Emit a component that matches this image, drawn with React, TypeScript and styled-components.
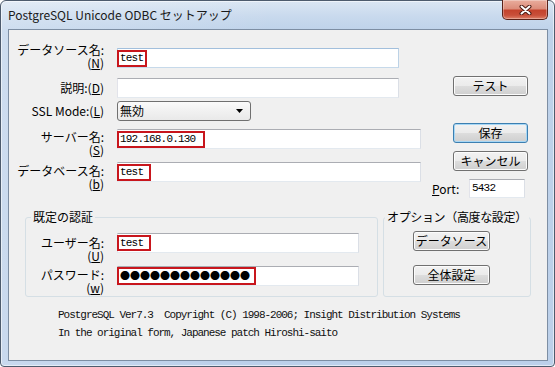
import React from 'react';
import styled, { createGlobalStyle } from 'styled-components';

const GlobalStyle = createGlobalStyle`
	html, body {
		margin: 0;
		padding: 0;
		background: #ffffff;
	}

	body {
		font-family: "Noto Sans CJK JP", "Liberation Sans", sans-serif;
		font-size: 12px;
		color: #000;
	}
`;

const Window = styled.div`
	width: 555px;
	height: 367px;
	box-sizing: border-box;
	display: flex;
	flex-direction: column;
	padding: 0 6px 5px 7px;
	border: 1px solid #4d5b6d;
	border-radius: 6px 6px 4px 4px;
	background:
		linear-gradient(100deg, rgba(255, 255, 255, 0.25) 0%, rgba(255, 255, 255, 0) 45%),
		linear-gradient(180deg, #dae6f3 0px, #c8d9ed 16px, #bed2ea 30px, #bcd0ea 100%);
	box-shadow: inset 0 0 0 1px rgba(255, 255, 255, 0.55);
`;

const TitleBar = styled.div`
	height: 28px;
	flex: none;
	display: flex;
	align-items: flex-start;
	justify-content: space-between;
`;

const Title = styled.div`
	line-height: 28px;
	font-size: 12px;
	color: #1a1a1a;
	white-space: nowrap;
`;

const CloseButton = styled.div`
	width: 46px;
	height: 20px;
	margin-top: -1px;
	box-sizing: border-box;
	display: flex;
	align-items: center;
	justify-content: center;
	border: 1px solid #5a2219;
	border-top: none;
	border-radius: 0 0 5px 5px;
	background: linear-gradient(180deg, #e9ad9d 0%, #dc8d7b 45%, #c4432d 55%, #c84f3a 80%, #de8068 100%);
	box-shadow: inset 0 0 0 1px rgba(255, 255, 255, 0.3);
`;

const Client = styled.div`
	height: 332px;
	box-sizing: border-box;
	display: flex;
	flex-direction: column;
	border: 1px solid #7d8ea3;
	background: #f0f0f0;
`;

const TopSection = styled.div`
	height: 179px;
	flex: none;
	display: flex;
	align-items: flex-start;
	gap: 11px;
`;

const FormColumn = styled.div`
	width: 412px;
	padding-top: 18px;
	display: flex;
	flex-direction: column;
`;

const ButtonColumn = styled.div`
	width: 96px;
	padding-top: 46px;
	display: flex;
	flex-direction: column;
	align-items: flex-end;
`;

const FieldRow = styled.div<{ $mt?: number }>`
	height: 20px;
	margin-top: ${p => p.$mt || 0}px;
	display: flex;
	align-items: flex-start;
`;

const Label = styled.div<{ $w?: number; $offset?: number }>`
	width: ${p => p.$w || 95}px;
	margin-right: 13px;
	margin-top: ${p => p.$offset || 0}px;
	flex: none;
	text-align: right;
	line-height: 12.5px;
	font-size: 12px;
	white-space: nowrap;

	u {
		text-decoration-thickness: 1px;
		text-underline-offset: 1px;
	}
`;

const Field = styled.div<{ $w: number; $h?: number; $focus?: boolean }>`
	width: ${p => p.$w}px;
	height: ${p => p.$h || 20}px;
	box-sizing: border-box;
	display: flex;
	align-items: center;
	background: #fff;
	border: 1px solid;
	border-color: ${p => p.$focus
		? '#a2bfdc #bcd2e6 #c6d9ea #bcd2e6'
		: '#abadb3 #dbdfe6 #e3e9ef #e2e3ea'};
`;

const Highlight = styled.span<{ $w: number; $h?: number }>`
	width: ${p => p.$w}px;
	height: ${p => p.$h || 17}px;
	margin-left: -1px;
	box-sizing: border-box;
	display: inline-flex;
	align-items: center;
	padding-left: 1px;
	border: 2px solid #c8161d;
	font-family: "Liberation Mono", monospace;
	font-size: 11px;
	letter-spacing: -0.8px;
	line-height: 1;
	white-space: nowrap;
	overflow: hidden;
`;

const Dots = styled.span`
	font-family: "Noto Sans CJK JP", sans-serif;
	font-size: 10px;
	letter-spacing: 0;
	line-height: 1;
`;

const FieldText = styled.span`
	padding-left: 2px;
	font-family: "Liberation Mono", monospace;
	font-size: 11px;
	letter-spacing: -0.8px;
	line-height: 1;
`;

const Select = styled.div`
	width: 134px;
	height: 20px;
	box-sizing: border-box;
	display: flex;
	align-items: center;
	justify-content: space-between;
	padding: 0 7px 0 2px;
	border: 1px solid #707070;
	border-radius: 3px;
	background: linear-gradient(180deg, #fbfbfb 0%, #f1f1f1 50%, #e9e9e9 100%);
	font-size: 12px;
	line-height: 18px;
`;

const Button = styled.button<{ $mt?: number; $w?: number; $primary?: boolean }>`
	width: ${p => p.$w || 75}px;
	height: 20px;
	margin: ${p => p.$mt || 0}px 0 0;
	padding: 0;
	box-sizing: border-box;
	font-family: "Noto Sans CJK JP", sans-serif;
	font-size: 12px;
	line-height: 18px;
	color: #000;
	border: 1px solid ${p => (p.$primary ? '#3c7fb1' : '#707070')};
	border-radius: 3px;
	background: linear-gradient(180deg, #f2f2f2 0%, #ebebeb 50%, #dddddd 51%, #cfcfcf 100%);
	box-shadow: inset 0 0 0 1px ${p => (p.$primary ? '#a7d7f5' : '#fcfcfc')};
	white-space: nowrap;
`;

const PortRow = styled.div`
	width: 100%;
	margin-top: 8px;
	padding-right: 3px;
	box-sizing: border-box;
	display: flex;
	align-items: center;
	justify-content: space-between;
	font-size: 12px;
	line-height: 12px;

	u {
		text-underline-offset: 1px;
	}
`;

const GroupsRow = styled.div`
	display: flex;
	gap: 5px;
	padding: 0 16px;
`;

const GroupBox = styled.fieldset<{ $w: number }>`
	width: ${p => p.$w}px;
	height: 88px;
	box-sizing: border-box;
	margin: 0;
	padding: 0;
	min-width: 0;
	border: 1px solid #d5dfe5;
	border-radius: 3px;
`;

const GroupTitle = styled.legend<{ $ml?: number; $tight?: boolean }>`
	height: 16px;
	margin-left: ${p => p.$ml || 0}px;
	padding: 0 2px;
	font-size: 12px;
	line-height: 16px;
	letter-spacing: ${p => (p.$tight ? '-0.35px' : '0')};
	white-space: nowrap;
`;

const AuthBody = styled.div`
	padding-top: 8px;
	display: flex;
	flex-direction: column;
`;

const OptionBody = styled.div`
	padding: 6px 0 0 29px;
	display: flex;
	flex-direction: column;
	align-items: flex-start;
`;

const Footer = styled.div`
	margin-top: 9px;
	padding-left: 49px;
	font-family: "Liberation Mono", monospace;
	font-size: 11px;
	letter-spacing: -1.02px;
	line-height: 18px;
	white-space: pre;
	color: #111;
`;

const CloseGlyph = () => (
	<svg width='13' height='10' viewBox='0 0 13 10'>
		<path d='M2.5 1.5 L10.5 8.5 M10.5 1.5 L2.5 8.5' stroke='#4a1a12' strokeWidth='4' strokeLinecap='round' fill='none'/>
		<path d='M2.5 1.5 L10.5 8.5 M10.5 1.5 L2.5 8.5' stroke='#ffffff' strokeWidth='2' strokeLinecap='round' fill='none'/>
	</svg>
);

const DropArrow = () => (
	<svg width='7' height='4' viewBox='0 0 7 4'>
		<path d='M0 0 L7 0 L3.5 4 Z' fill='#000'/>
	</svg>
);

const App = () => {
	return (
		<>
			<GlobalStyle/>
			<Window>
				<TitleBar>
					<Title>PostgreSQL Unicode ODBC セットアップ</Title>
					<CloseButton><CloseGlyph/></CloseButton>
				</TitleBar>
				<Client>
					<TopSection>
						<FormColumn>
							<FieldRow>
								<Label $offset={-4}>データソース名:<br/>(<u>N</u>)</Label>
								<Field $w={282} $focus>
									<Highlight $w={30}>test</Highlight>
								</Field>
							</FieldRow>
							<FieldRow $mt={10}>
								<Label $offset={4}>説明:(<u>D</u>)</Label>
								<Field $w={282}/>
							</FieldRow>
							<FieldRow $mt={3}>
								<Label $offset={4}>SSL Mode:(<u>L</u>)</Label>
								<Select>
									<span>無効</span>
									<DropArrow/>
								</Select>
							</FieldRow>
							<FieldRow $mt={8}>
								<Label $offset={2}>サーバー名:<br/>(<u>S</u>)</Label>
								<Field $w={304}>
									<Highlight $w={88}>192.168.0.130</Highlight>
								</Field>
							</FieldRow>
							<FieldRow $mt={13}>
								<Label $offset={3}>データベース名:<br/>(<u>b</u>)</Label>
								<Field $w={304}>
									<Highlight $w={34}>test</Highlight>
								</Field>
							</FieldRow>
						</FormColumn>
						<ButtonColumn>
							<Button>テスト</Button>
							<Button $mt={27} $primary>保存</Button>
							<Button $mt={8}>キャンセル</Button>
							<PortRow>
								<span><u>P</u>ort:</span>
								<Field $w={56} $h={19}>
									<FieldText>5432</FieldText>
								</Field>
							</PortRow>
						</ButtonColumn>
					</TopSection>
					<GroupsRow>
						<GroupBox $w={353}>
							<GroupTitle $ml={5}>既定の認証</GroupTitle>
							<AuthBody>
								<FieldRow>
									<Label $w={78} $offset={4}>ユーザー名:<br/>(<u>U</u>)</Label>
									<Field $w={242}>
										<Highlight $w={34} $h={16}>test</Highlight>
									</Field>
								</FieldRow>
								<FieldRow $mt={13}>
									<Label $w={78} $offset={3}>パスワード:<br/>(<u>w</u>)</Label>
									<Field $w={242}>
										<Highlight $w={139} $h={18}><Dots>●●●●●●●●●●●●●</Dots></Highlight>
									</Field>
								</FieldRow>
							</AuthBody>
						</GroupBox>
						<GroupBox $w={148}>
							<GroupTitle $ml={1} $tight>オプション（高度な設定）</GroupTitle>
							<OptionBody>
								<Button $w={77}>データソース</Button>
								<Button $w={77} $mt={14}>全体設定</Button>
							</OptionBody>
						</GroupBox>
					</GroupsRow>
					<Footer>
						{'PostgreSQL Ver7.3  Copyright (C) 1998-2006; Insight Distribution Systems\nIn the original form, Japanese patch Hiroshi-saito'}
					</Footer>
				</Client>
			</Window>
		</>
	);
};

export default App;
